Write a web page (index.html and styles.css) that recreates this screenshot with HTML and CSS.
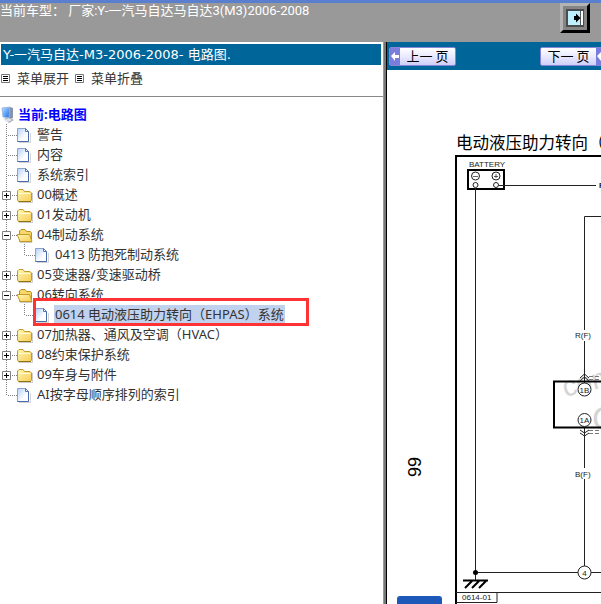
FILE: index.html
```html
<!DOCTYPE html>
<html lang="zh-CN">
<head>
<meta charset="utf-8">
<title>电路图</title>
<link rel="stylesheet" href="styles.css">
</head>
<body>
<svg class="defs" aria-hidden="true">
  <defs>
    <linearGradient id="paper" x1="0" y1="0" x2="1" y2="1"><stop offset="0" stop-color="#b5d0fa"/><stop offset=".65" stop-color="#fff"/></linearGradient>
    <linearGradient id="gold" x1="0" y1="0" x2="1" y2="1"><stop offset="0" stop-color="#fff6b0"/><stop offset="1" stop-color="#f8cc55"/></linearGradient>
    <linearGradient id="screen" x1="0" y1="0" x2="1" y2="1"><stop offset="0" stop-color="#b9e5ff"/><stop offset="1" stop-color="#1266e8"/></linearGradient>
    <symbol id="doc" viewBox="0 0 18 20" overflow="visible">
      <path d="M12.500 9v9.500H1" fill="none" stroke="#aaa" opacity=".5"/>
      <path d="M-.5 4.500H7.500L10.500 7.500V17.500H-.5Z" fill="url(#paper)" stroke="#8ba3cc"/>
      <path d="M10.500 7.500V17.500H-.5" fill="none" stroke="#4a6bab"/>
      <path d="M7.500 4.500V7.500H10.500Z" fill="#fff" stroke="#5876ad"/>
    </symbol>
    <symbol id="folder" viewBox="0 0 18 20" overflow="visible">
      <path d="M1 18.500H14.500V9" fill="none" stroke="#aaa" opacity=".6"/>
      <path d="M-.5 16V7L1 5.500H5L6.500 7.500H12L13.500 9V16L12.500 17.500H.5Z" fill="url(#gold)" stroke="#c49b28"/>
      <path d="M.5 9.500H12.500" stroke="#fffbd0"/><path d="M.5 17.500H13" stroke="#8f7417"/>
    </symbol>
    <symbol id="open" viewBox="0 0 18 20" overflow="visible">
      <path d="M2 18.500H14" fill="none" stroke="#aaa" opacity=".6"/>
      <path d="M1.500 17.500V7L3 5.500H7L8.500 7.500H12.500L13.500 9V17Z" fill="#f7d768" stroke="#b89122"/>
      <path d="M-.8 10.500H11.500L14 17.500H2Z" fill="url(#gold)" stroke="#c49b28"/>
    </symbol>
    <symbol id="tee" viewBox="0 0 18 20"><path d="M6.500 0V20M8 11.500H17" class="dots"/></symbol>
    <symbol id="elbow" viewBox="0 0 18 20"><path d="M6.500 0V12M8 11.500H17" class="dots"/></symbol>
    <symbol id="line" viewBox="0 0 18 20"><path d="M6.500 0V20" class="dots"/></symbol>
    <symbol id="plus" viewBox="0 0 18 20"><use href="#tee"/><path d="M2.500 7.500H10.500V15.500H2.500Z" fill="#fff" stroke="#808080"/><path d="M4 11.500H9M6.500 9V14" stroke="#000"/></symbol>
    <symbol id="minus" viewBox="0 0 18 20"><use href="#tee"/><path d="M2.500 7.500H10.500V15.500H2.500Z" fill="#fff" stroke="#808080"/><path d="M4 11.500H9" stroke="#000"/></symbol>
    <symbol id="list" viewBox="0 0 9 9"><path d="M.5.5H8.500V8.500H.5Z" fill="#fff" stroke="#777"/><path d="M2 2.500H7M2 4.500H7M2 6.500H7" stroke="#000"/></symbol>
  </defs>
</svg>

<header class="top">
  <span class="model">当前车型： 厂家:Y-一汽马自达马自达3(M3)2006-2008</span>
  <button class="exit" type="button" aria-label="退出">
    <svg width="18" height="18" viewBox="0 0 18 18"><path d="M0 0H18V18H0Z" fill="#4c4c4c"/><path d="M2 2H14V16H2Z" fill="#bdefff"/><path d="M15 2H17V16H15Z" fill="#fff"/><path d="M14.500 2V16" stroke="#555"/><path d="M8 7H10V4.500L14.500 9L10 13.500V11H8Z" fill="#000"/></svg>
  </button>
</header>

<main class="frames">
  <section class="left">
    <h1 class="title">Y-一汽马自达-M3-2006-2008- 电路图.</h1>
    <nav class="tools">
      <a href="#"><svg width="9" height="9"><use href="#list"/></svg>菜单展开</a>
      <a href="#"><svg width="9" height="9"><use href="#list"/></svg>菜单折叠</a>
    </nav>
    <div class="root">
      <svg width="18" height="20" viewBox="0 0 18 20"><path d="M4 15L9 13L14 16L9 19Z" fill="#a9adb8"/><path d="M2 4L10 3L9 14L3 13Z" fill="url(#screen)" stroke="#9dbbe0"/><path d="M10 3L13 4V14L9 15Z" fill="#8993ad"/><path d="M4 16L9 14L12 16L8 18Z" fill="#dde2ea"/></svg>
      <a href="#">当前:电路图</a>
    </div>
    <ul class="tree">
      <li><div class="row"><svg><use href="#tee"/></svg><svg><use href="#doc"/></svg><a href="#">警告</a></div></li>
      <li><div class="row"><svg><use href="#tee"/></svg><svg><use href="#doc"/></svg><a href="#">内容</a></div></li>
      <li><div class="row"><svg><use href="#tee"/></svg><svg><use href="#doc"/></svg><a href="#">系统索引</a></div></li>
      <li><div class="row"><svg><use href="#plus"/></svg><svg><use href="#folder"/></svg><a href="#">00概述</a></div></li>
      <li><div class="row"><svg><use href="#plus"/></svg><svg><use href="#folder"/></svg><a href="#">01发动机</a></div></li>
      <li><div class="row"><svg><use href="#minus"/></svg><svg><use href="#open"/></svg><a href="#">04制动系统</a></div>
        <ul><li><div class="row"><svg><use href="#line"/></svg><svg><use href="#elbow"/></svg><svg><use href="#doc"/></svg><a href="#">0413 防抱死制动系统</a></div></li></ul>
      </li>
      <li><div class="row"><svg><use href="#plus"/></svg><svg><use href="#folder"/></svg><a href="#">05变速器/变速驱动桥</a></div></li>
      <li><div class="row"><svg><use href="#minus"/></svg><svg><use href="#open"/></svg><a href="#">06转向系统</a></div>
        <ul><li><div class="row marked"><svg><use href="#line"/></svg><svg><use href="#elbow"/></svg><svg><use href="#doc"/></svg><a class="selected" href="#">0614 电动液压助力转向（EHPAS）系统</a></div></li></ul>
      </li>
      <li><div class="row"><svg><use href="#plus"/></svg><svg><use href="#folder"/></svg><a href="#">07加热器、通风及空调（HVAC）</a></div></li>
      <li><div class="row"><svg><use href="#plus"/></svg><svg><use href="#folder"/></svg><a href="#">08约束保护系统</a></div></li>
      <li><div class="row"><svg><use href="#plus"/></svg><svg><use href="#folder"/></svg><a href="#">09车身与附件</a></div></li>
      <li><div class="row"><svg><use href="#elbow"/></svg><svg><use href="#doc"/></svg><a href="#">AI按字母顺序排列的索引</a></div></li>
    </ul>
  </section>
  <div class="divider"></div>
  <section class="right">
    <div class="pager">
      <button class="page" type="button"><svg width="10" height="17" viewBox="0 0 10 17"><path d="M0 0H10V17H0Z" fill="#7b7ddd"/><path d="M1 8L5 4V7H9V10H5V13Z" fill="#fff"/></svg><span>上一 页</span></button>
      <button class="page" type="button"><span>下一 页</span><svg width="10" height="17" viewBox="0 0 10 17"><path d="M0 0H10V17H0Z" fill="#7b7ddd"/><path d="M1 8L5 4V7H9V10H5V13Z" fill="#fff"/></svg></button>
    </div>
    <svg class="diagram" width="214" height="534" viewBox="387 70 214 534" role="img" aria-label="电动液压助力转向电路图">
      <g fill="#d4d4d4"><text x="565" y="397" font-size="28" transform="rotate(-14 565 397)">com</text><text x="592" y="430" font-size="34">C</text></g>
      <text x="456" y="149" font-size="16.500" class="cjk">电动液压助力转向（</text>
      <g fill="none" stroke="#222">
        <path d="M456 604V156H601" stroke="#000" stroke-width="2"/>
        <path d="M468 170H504V189H468Z" stroke="#000" stroke-width="2"/>
        <circle cx="475.500" cy="176" r="4"/><circle cx="496" cy="176" r="4"/>
        <path d="M473 176.500H478M494 176.500H498M496 174V178" stroke-width=".7"/>
        <circle cx="475.500" cy="185" r="2.500"/><circle cx="496" cy="185" r="2.500"/>
        <path d="M499 185.500H596M475.500 188V580M601 216.500H584.500V330M584.500 341V383M584.500 427V468M584.500 479V566M475 572.500H578M591 572.500H601"/>
        <path d="M601 381.500H554V427.500H601" stroke="#000" stroke-width="2"/>
        <path d="M580 378L584.500 374L589 378M580 381L584.500 377L589 381M580 430L584.500 433L589 430M580 433L584.500 436L589 433"/>
        <path d="M589 376.500H601M589 379.500H601M589 430.500H601M589 433.500H601" stroke="#777" stroke-dasharray="4 2"/>
        <circle cx="584.500" cy="389.500" r="6.500" fill="#fff"/><circle cx="584.500" cy="420" r="6.500" fill="#fff"/><circle cx="584.500" cy="572.500" r="6.500" fill="#fff"/>
        <path d="M463 580.500H488M472 581L465 588M479 581L472 588M486 581L479 588" stroke="#000" stroke-width="2"/>
        <path d="M456 592.500H601M456 602.500H497V592"/>
      </g>
      <circle cx="475.500" cy="572.500" r="2.500"/>
      <g font-size="8" fill="#222">
        <text x="469" y="167">BATTERY</text><text x="599" y="188" font-weight="bold">R</text>
        <text x="575" y="338">R(F)</text><text x="575" y="477">B(F)</text>
        <text x="584.500" y="392.500" text-anchor="middle">1B</text><text x="584.500" y="423" text-anchor="middle">1A</text><text x="584.500" y="575.500" text-anchor="middle">4</text>
        <text x="462" y="600">0614-01</text>
      </g>
      <text transform="translate(421 477) rotate(-90)" font-size="18">99</text>
      <rect x="397" y="596" width="45" height="16" rx="3" fill="#1c59b9"/>
    </svg>
  </section>
</main>
</body>
</html>
```
FILE: styles.css
```css
*, *::after { box-sizing: border-box; }
body {
  margin: 0;
  min-height: 100vh;
  display: flex;
  flex-direction: column;
  overflow: hidden;
  background: #fff;
  color: #333;
  font: 13px/20px "Noto Sans", "Noto Sans CJK SC", sans-serif;
}
.defs { position: absolute; width: 0; height: 0; }
.dots { fill: none; stroke: #808080; stroke-dasharray: 1 1; }
a { color: inherit; text-decoration: none; }

.top {
  height: 42px;
  display: flex;
  justify-content: space-between;
  align-items: flex-start;
  border-top: 3px solid #5b7fcf;
  padding-right: 11px;
  background: #999;
  color: #fff;
}
.model {
  line-height: 16px;
  font-family: Roboto, "Noto Sans CJK SC", sans-serif;
}
.exit {
  width: 30px;
  height: 30px;
  display: grid;
  place-items: center;
  margin: 0;
  padding: 0;
  border: 3px solid;
  border-color: #b4b4b4 #000 #000 #b4b4b4;
  background: #858585;
}

.frames {
  flex: 1;
  display: grid;
  grid-template-columns: 383px 4px minmax(0, 1fr);
}
.title {
  margin: 2px 2px 0 1px;
  padding-left: 2px;
  background: #069;
  color: #fff;
  font-family: "DejaVu Sans", "Noto Sans CJK SC", sans-serif;
  font-size: 13px;
  font-weight: normal;
  line-height: 21px;
}
.tools {
  display: flex;
  gap: 6px;
  height: 32px;
  padding: 3px 0 0 1px;
  border-bottom: 1px solid #888;
}
.tools a { display: flex; align-items: center; gap: 7px; height: 20px; }
.root {
  display: flex;
  margin-top: 7px;
  color: #00f;
  font-weight: bold;
}
.tree, .tree ul { margin: 0; padding: 0; list-style: none; }
.row { position: relative; display: flex; height: 20px; }
.row svg { flex: none; width: 18px; height: 20px; overflow: visible; }
.row a { padding: 0 1px; white-space: nowrap; }
.row .selected {
  height: 18px;
  margin-top: 1px;
  line-height: 18px;
  background: #c1d2ee;
}
.marked::after {
  content: "";
  position: absolute;
  left: 33px;
  top: -6px;
  width: 276px;
  height: 28px;
  border: 3px solid #f33;
}

.divider { background: linear-gradient(90deg, #999 0 1px, #777 1px 3px, #000 3px); }
.right { overflow: hidden; }
.pager {
  display: flex;
  gap: 84px;
  height: 28px;
  padding: 5px 0 0 2px;
  background: #069;
}
.page {
  flex: none;
  display: flex;
  width: 67px;
  height: 19px;
  padding: 0;
  border: 1px solid #8585d8;
  border-radius: 2px;
  background: linear-gradient(#fff, #e9e9ff 50%, #cfcff8);
  color: #000;
  font: 13px/16px "Noto Sans CJK SC", sans-serif;
}
.page span { flex: 1; white-space: nowrap; }
.diagram { display: block; font-family: "Liberation Sans", sans-serif; }
.cjk { font-family: "Noto Sans CJK SC", sans-serif; }
```
